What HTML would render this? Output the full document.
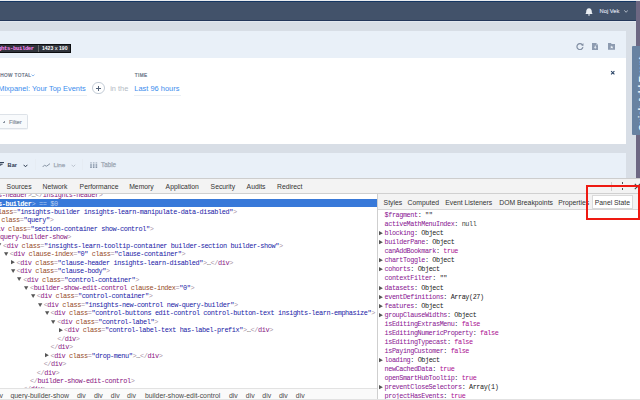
<!DOCTYPE html>
<html><head><meta charset="utf-8">
<style>
html,body{margin:0;padding:0;width:640px;height:400px;overflow:hidden;background:#fff;position:relative}
.a{position:absolute}
.sans{font-family:"Liberation Sans",sans-serif;white-space:pre}
.mono{font-family:"Liberation Mono",monospace;font-size:6.9px;letter-spacing:-0.39px;white-space:pre}
.tri-d,.tri-r{width:4px;height:4px}
.tab{font-family:"Liberation Sans",sans-serif;font-size:6.8px;color:#333;white-space:pre;line-height:9px}
</style></head><body>
<!-- ============ APP ============ -->
<div class="a" style="left:0;top:0;width:640px;height:178px;background:#d8dee6"></div>
<div class="a" style="left:0;top:0;width:640px;height:1px;background:#e9ecf0"></div>
<div class="a" style="left:0;top:1px;width:636px;height:1px;background:#153764"></div>
<div class="a" style="left:0;top:2px;width:636px;height:18px;background:#42526a"></div>
<div class="a" style="left:0;top:20px;width:636px;height:1px;background:#25375a"></div>
<div class="a" style="left:0;top:21px;width:636px;height:1px;background:#e2e7ee"></div>
<div class="a" style="left:636px;top:1px;width:4px;height:177px;background:#6d6782"></div>
<!-- bell -->
<svg class="a" style="left:585px;top:7.6px" width="8" height="8" viewBox="0 0 8 8"><path d="M4 0.3C1.9 0.3 1.2 2.2 1.2 3.8L1.0 5.2L0.2 6.0H7.8L7.0 5.2L6.8 3.8C6.8 2.2 6.1 0.3 4 0.3z" fill="#e9edf2"/><ellipse cx="4" cy="6.9" rx="1" ry="0.7" fill="#e9edf2"/></svg>
<div class="a sans" style="left:599.6px;top:7px;font-size:5.75px;line-height:8px;color:#d9dfe7;-webkit-text-stroke:0.15px #d9dfe7">Noj Vek</div>
<svg class="a" style="left:623.6px;top:10.2px" width="4.4" height="3" viewBox="0 0 4.4 3"><path d="M0.3 0.3L2.1 2.3L3.9 0.3" stroke="#c3cbd6" stroke-width="0.85" fill="none"/></svg>

<!-- top light-blue panel -->
<div class="a" style="left:0;top:30.5px;width:626px;height:27px;background:#e9f0f8"></div>
<!-- tooltip -->
<div class="a" style="left:-10px;top:43.9px;width:81px;height:9.5px;background:#30343c;box-sizing:border-box;border:1px solid #0c0d10"></div>
<div class="a mono" style="left:-2.0px;top:43.7px;font-size:5.6px;letter-spacing:-0.37px;line-height:9.5px;color:#ff85f3;font-weight:bold">ghts-builder</div>
<div class="a" style="left:38.2px;top:45.4px;width:0.7px;height:6.4px;background:#6a6a6a"></div>
<div class="a sans" style="left:41.9px;top:43.9px;font-size:5.1px;line-height:9.5px;color:#ffffff;font-weight:bold;transform:scaleY(1.2);transform-origin:0 50%">1423<span style="font-weight:normal;font-size:5.8px;margin:0 1.2px;position:relative;top:0.5px">×</span>190</div>
<!-- icons right -->
<svg class="a" style="left:575.5px;top:42.6px" width="8" height="7" viewBox="0 0 8 7"><path d="M6.6 2.2A3 3 0 1 0 6.9 4.2" stroke="#8491a5" stroke-width="1.25" fill="none"/><path d="M5.0 1.9L7.5 0.3L7.4 3.2z" fill="#8491a5"/></svg>
<svg class="a" style="left:591.9px;top:42.5px" width="6.5" height="7.2" viewBox="0 0 6.5 7.2"><path d="M0 0h4.2l2.3 2.3V7.2H0z" fill="#8d9bb0"/><path d="M4.2 0V2.3H6.5z" fill="#b9c4d3"/><rect x="2.8" y="2.6" width="0.9" height="2" fill="#eef3f9"/><path d="M1.9 4.3H4.6L3.25 5.8z" fill="#eef3f9"/></svg>
<svg class="a" style="left:607.6px;top:42.9px" width="7.5" height="6.8" viewBox="0 0 7.5 6.8"><path d="M0 0h2.9l0.8 0.9H7.5V6.8H0z" fill="#8d9bb0"/><path d="M3.75 2.6l0.55 1.1h1.2l-0.95 0.75 0.4 1.15-1.2-0.7-1.2 0.7 0.4-1.15-0.95-0.75h1.2z" fill="#eef3f9"/></svg>

<!-- white panel -->
<div class="a" style="left:0;top:57.5px;width:626px;height:86.5px;background:#ffffff"></div>
<div class="a sans" style="left:-3.4px;top:72.1px;font-size:4.7px;line-height:8px;color:#677283;letter-spacing:0.42px;-webkit-text-stroke:0.2px #677283">SHOW TOTAL</div>
<svg class="a" style="left:31.4px;top:74.4px" width="4" height="3" viewBox="0 0 4 3"><path d="M0.5 0.6L2 2L3.5 0.6" stroke="#5a9be6" stroke-width="0.7" fill="none"/></svg>
<div class="a sans" style="left:-1.8px;top:83.8px;font-size:7.45px;line-height:10px;color:#3c8ded">Mixpanel: Your Top Events</div>
<div class="a" style="left:0;top:95.2px;width:87px;height:0.8px;background:#ebf0f5"></div>
<div class="a" style="left:92.1px;top:81.9px;width:12.6px;height:12.6px;box-sizing:border-box;border:0.8px solid #c3ccd6;border-radius:50%;background:#fff"></div>
<div class="a" style="left:95.7px;top:87.85px;width:5.4px;height:0.9px;background:#55647a"></div>
<div class="a" style="left:97.95px;top:85.6px;width:0.9px;height:5.4px;background:#55647a"></div>
<div class="a sans" style="left:110.2px;top:83.8px;font-size:7.4px;line-height:10px;color:#b3bac4">in the</div>
<div class="a sans" style="left:134.7px;top:72.1px;font-size:4.7px;line-height:8px;color:#677283;letter-spacing:0.42px;-webkit-text-stroke:0.2px #677283">TIME</div>
<div class="a sans" style="left:134.3px;top:83.8px;font-size:7.45px;line-height:10px;color:#3c8ded">Last 96 hours</div>
<div class="a" style="left:134px;top:95.2px;width:46.5px;height:0.8px;background:#ebf0f5"></div>
<!-- close x -->
<svg class="a" style="left:610px;top:70px" width="5.5" height="5.5" viewBox="0 0 5.5 5.5"><path d="M1.1 1.1L4.4 4.4M4.4 1.1L1.1 4.4" stroke="#2a4466" stroke-width="1.1"/></svg>
<!-- filter button -->
<div class="a" style="left:-5px;top:114.4px;width:32.6px;height:14.6px;box-sizing:border-box;border:0.8px solid #dde2e8;border-radius:1.5px;background:#f8fafc;box-shadow:0 0.6px 0 #e6eaef"></div>
<div class="a" style="left:2.7px;top:121.6px;width:2.6px;height:0.8px;background:#8c96a3"></div><div class="a" style="left:3.6px;top:120.7px;width:0.8px;height:2.6px;background:#8c96a3"></div>
<div class="a sans" style="left:8.9px;top:117.6px;font-size:5.8px;line-height:8px;color:#838d99;-webkit-text-stroke:0.15px #838d99">Filter</div>

<!-- bottom light blue panel -->
<div class="a" style="left:0;top:153px;width:626px;height:25px;background:#e9f0f8"></div>
<svg class="a" style="left:-1px;top:161.5px" width="6" height="4.5" viewBox="0 0 6 4.5"><rect x="0" y="0" width="5" height="1.1" fill="#34445a"/><rect x="0" y="1.7" width="3.6" height="1.1" fill="#34445a"/><rect x="0" y="3.4" width="2.2" height="1.1" fill="#34445a"/></svg>
<div class="a sans" style="left:7.6px;top:161px;font-size:5.6px;line-height:8px;color:#2d3b4f;font-weight:bold">Bar</div>
<svg class="a" style="left:23px;top:163.5px" width="5" height="4" viewBox="0 0 5 4"><path d="M0.6 0.8L2.5 2.8L4.4 0.8" stroke="#2d3b4f" stroke-width="1" fill="none"/></svg>
<div class="a" style="left:34.5px;top:159px;width:0.6px;height:11px;background:#e6ecf3"></div>
<svg class="a" style="left:41.8px;top:162.8px" width="8.5" height="4.5" viewBox="0 0 8.5 4.5"><path d="M0.4 4L2.6 2.3L4.6 3.2L8.1 0.6" stroke="#8894a4" stroke-width="1" fill="none"/></svg>
<div class="a sans" style="left:53.5px;top:161px;font-size:6.2px;line-height:8px;color:#9ea8b4;-webkit-text-stroke:0.25px #9ea8b4">Line</div>
<svg class="a" style="left:71px;top:163.8px" width="5" height="4" viewBox="0 0 5 4"><path d="M0.6 0.8L2.4 2.6L4.2 0.8" stroke="#a7b0bb" stroke-width="0.7" fill="none"/></svg>
<div class="a" style="left:81.6px;top:159px;width:0.6px;height:11px;background:#e6ecf3"></div>
<svg class="a" style="left:90.4px;top:162.4px" width="7.4" height="6" viewBox="0 0 7.4 6"><rect x="0.2" y="0.3" width="1.6" height="1.2" fill="#a3afbf"/><rect x="2.9" y="0.3" width="1.6" height="1.2" fill="#a3afbf"/><rect x="5.6" y="0.3" width="1.6" height="1.2" fill="#a3afbf"/><rect x="0.2" y="2.4" width="1.6" height="1.2" fill="#6b7c93"/><rect x="2.9" y="2.4" width="1.6" height="1.2" fill="#6b7c93"/><rect x="5.6" y="2.4" width="1.6" height="1.2" fill="#6b7c93"/><rect x="0.2" y="4.5" width="1.6" height="1.2" fill="#5d6e86"/><rect x="2.9" y="4.5" width="1.6" height="1.2" fill="#5d6e86"/><rect x="5.6" y="4.5" width="1.6" height="1.2" fill="#5d6e86"/></svg>
<div class="a sans" style="left:101px;top:161px;font-size:6.3px;line-height:8px;color:#9ea8b4;-webkit-text-stroke:0.25px #9ea8b4">Table</div>

<!-- right strip tab -->
<div class="a" style="left:632px;top:46px;width:10px;height:88.5px;background:#6882a1;border-radius:1px"></div>
<div class="a sans" style="left:640.9px;top:94px;width:0;height:0"><div style="position:absolute;left:0;top:0;transform:translate(-50%,-50%) rotate(-90deg);font-size:9.4px;line-height:9px;color:#fff;font-weight:bold;white-space:pre">Quick Add Event</div></div>

<!-- ============ DEVTOOLS ============ -->
<div class="a" style="left:0;top:178px;width:640px;height:222px;background:#fff"></div>
<div class="a" style="left:0;top:178px;width:640px;height:15.5px;background:#f3f3f3;border-top:0.8px solid #cdcdcd;box-sizing:border-box;border-bottom:0.8px solid #d0d0d0"></div>
<div class="a tab" style="left:6.6px;top:181.5px">Sources</div>
<div class="a tab" style="left:42.6px;top:181.5px">Network</div>
<div class="a tab" style="left:79.6px;top:181.5px">Performance</div>
<div class="a tab" style="left:129.2px;top:181.5px">Memory</div>
<div class="a tab" style="left:165.6px;top:181.5px">Application</div>
<div class="a tab" style="left:210.6px;top:181.5px">Security</div>
<div class="a tab" style="left:246.6px;top:181.5px">Audits</div>
<div class="a tab" style="left:277.1px;top:181.5px">Redirect</div>
<div class="a" style="left:611.3px;top:181.5px;width:0.7px;height:9px;background:#cfcfcf"></div>
<div class="a" style="left:621.7px;top:182.2px;width:1px;height:1.6px;background:#555"></div>
<div class="a" style="left:621.6px;top:185.4px;width:1.1px;height:1.1px;background:#555"></div>
<div class="a" style="left:621.7px;top:188.4px;width:1px;height:1.6px;background:#555"></div>
<svg class="a" style="left:634.3px;top:182.8px" width="7" height="7" viewBox="0 0 7 7"><path d="M0.8 0.8L6.2 6.2M6.2 0.8L0.8 6.2" stroke="#444" stroke-width="1.1"/></svg>

<!-- DOM tree -->
<div class="a" style="left:0;top:193.5px;width:377px;height:194.5px;overflow:hidden">
<div class="a" style="left:0;top:-193.5px;width:640px;height:400px">
<div class="a mono" style="letter-spacing:-0.405px;left:-31.90px;top:191.05px;height:8.45px;line-height:8.45px"><span style="color:#a894a6">&lt;</span><span style="color:#881280">insights-header</span><span style="color:#a894a6">&gt;</span><span style="color:#333">…</span><span style="color:#a894a6">&lt;/</span><span style="color:#881280">insights-header</span><span style="color:#a894a6">&gt;</span></div>
<div class="a" style="left:0;top:198.70px;width:377px;height:8.45px;background:#3879d9"></div>
<div class="a mono" style="letter-spacing:-0.405px;left:-31.90px;top:199.50px;height:8.45px;line-height:8.45px"><span style="color:#fff;font-weight:bold">&lt;insights-builder</span><span style="color:#b9cdf0">&gt; == $0</span></div>
<div class="a mono" style="letter-spacing:-0.405px;left:-24.42px;top:207.95px;height:8.45px;line-height:8.45px"><span style="color:#a894a6">&lt;</span><span style="color:#881280">div</span> <span style="color:#954a1f">class</span><span style="color:#a894a6">=</span><span style="color:#1a1aa6">"insights-builder insights-learn-manipulate-data-disabled"</span><span style="color:#a894a6">&gt;</span></div>
<div class="a mono" style="letter-spacing:-0.405px;left:-17.54px;top:216.40px;height:8.45px;line-height:8.45px"><span style="color:#a894a6">&lt;</span><span style="color:#881280">div</span> <span style="color:#954a1f">class</span><span style="color:#a894a6">=</span><span style="color:#1a1aa6">"query"</span><span style="color:#a894a6">&gt;</span></div>
<div class="a mono" style="letter-spacing:-0.405px;left:-10.66px;top:224.85px;height:8.45px;line-height:8.45px"><span style="color:#a894a6">&lt;</span><span style="color:#881280">div</span> <span style="color:#954a1f">class</span><span style="color:#a894a6">=</span><span style="color:#1a1aa6">"section-container show-control"</span><span style="color:#a894a6">&gt;</span></div>
<div class="a mono" style="letter-spacing:-0.405px;left:-3.78px;top:233.30px;height:8.45px;line-height:8.45px"><span style="color:#a894a6">&lt;</span><span style="color:#881280">query-builder-show</span><span style="color:#a894a6">&gt;</span></div>
<svg class="a" style="left:-2.95px;top:243.45px" width="5" height="5" viewBox="0 0 5 5"><path d="M0 0.2H4.3L2.15 4z" fill="#555"/></svg>
<div class="a mono" style="letter-spacing:-0.405px;left:2.95px;top:241.75px;height:8.45px;line-height:8.45px"><span style="color:#a894a6">&lt;</span><span style="color:#881280">div</span> <span style="color:#954a1f">class</span><span style="color:#a894a6">=</span><span style="color:#1a1aa6">"insights-learn-tooltip-container builder-section builder-show"</span><span style="color:#a894a6">&gt;</span></div>
<svg class="a" style="left:3.83px;top:251.90px" width="5" height="5" viewBox="0 0 5 5"><path d="M0 0.2H4.3L2.15 4z" fill="#555"/></svg>
<div class="a mono" style="letter-spacing:-0.405px;left:9.73px;top:250.20px;height:8.45px;line-height:8.45px"><span style="color:#a894a6">&lt;</span><span style="color:#881280">div</span> <span style="color:#954a1f">clause-index</span><span style="color:#a894a6">=</span><span style="color:#1a1aa6">"0"</span> <span style="color:#954a1f">class</span><span style="color:#a894a6">=</span><span style="color:#1a1aa6">"clause-container"</span><span style="color:#a894a6">&gt;</span></div>
<svg class="a" style="left:11.11px;top:260.05px" width="5" height="5" viewBox="0 0 5 5"><path d="M0 0.1V4.3L3.9 2.2z" fill="#555"/></svg>
<div class="a mono" style="letter-spacing:-0.405px;left:16.51px;top:258.65px;height:8.45px;line-height:8.45px"><span style="color:#a894a6">&lt;</span><span style="color:#881280">div</span> <span style="color:#954a1f">class</span><span style="color:#a894a6">=</span><span style="color:#1a1aa6">"clause-header insights-learn-disabled"</span><span style="color:#a894a6">&gt;</span><span style="color:#333">…</span><span style="color:#a894a6">&lt;/</span><span style="color:#881280">div</span><span style="color:#a894a6">&gt;</span></div>
<svg class="a" style="left:10.61px;top:268.80px" width="5" height="5" viewBox="0 0 5 5"><path d="M0 0.2H4.3L2.15 4z" fill="#555"/></svg>
<div class="a mono" style="letter-spacing:-0.405px;left:16.51px;top:267.10px;height:8.45px;line-height:8.45px"><span style="color:#a894a6">&lt;</span><span style="color:#881280">div</span> <span style="color:#954a1f">class</span><span style="color:#a894a6">=</span><span style="color:#1a1aa6">"clause-body"</span><span style="color:#a894a6">&gt;</span></div>
<svg class="a" style="left:17.39px;top:277.25px" width="5" height="5" viewBox="0 0 5 5"><path d="M0 0.2H4.3L2.15 4z" fill="#555"/></svg>
<div class="a mono" style="letter-spacing:-0.405px;left:23.29px;top:275.55px;height:8.45px;line-height:8.45px"><span style="color:#a894a6">&lt;</span><span style="color:#881280">div</span> <span style="color:#954a1f">class</span><span style="color:#a894a6">=</span><span style="color:#1a1aa6">"control-container"</span><span style="color:#a894a6">&gt;</span></div>
<svg class="a" style="left:24.17px;top:285.70px" width="5" height="5" viewBox="0 0 5 5"><path d="M0 0.2H4.3L2.15 4z" fill="#555"/></svg>
<div class="a mono" style="letter-spacing:-0.405px;left:30.07px;top:284.00px;height:8.45px;line-height:8.45px"><span style="color:#a894a6">&lt;</span><span style="color:#881280">builder-show-edit-control</span> <span style="color:#954a1f">clause-index</span><span style="color:#a894a6">=</span><span style="color:#1a1aa6">"0"</span><span style="color:#a894a6">&gt;</span></div>
<svg class="a" style="left:30.95px;top:294.15px" width="5" height="5" viewBox="0 0 5 5"><path d="M0 0.2H4.3L2.15 4z" fill="#555"/></svg>
<div class="a mono" style="letter-spacing:-0.405px;left:36.85px;top:292.45px;height:8.45px;line-height:8.45px"><span style="color:#a894a6">&lt;</span><span style="color:#881280">div</span> <span style="color:#954a1f">class</span><span style="color:#a894a6">=</span><span style="color:#1a1aa6">"control-container"</span><span style="color:#a894a6">&gt;</span></div>
<svg class="a" style="left:37.73px;top:302.60px" width="5" height="5" viewBox="0 0 5 5"><path d="M0 0.2H4.3L2.15 4z" fill="#555"/></svg>
<div class="a mono" style="letter-spacing:-0.405px;left:43.63px;top:300.90px;height:8.45px;line-height:8.45px"><span style="color:#a894a6">&lt;</span><span style="color:#881280">div</span> <span style="color:#954a1f">class</span><span style="color:#a894a6">=</span><span style="color:#1a1aa6">"insights-new-control new-query-builder"</span><span style="color:#a894a6">&gt;</span></div>
<svg class="a" style="left:44.51px;top:311.05px" width="5" height="5" viewBox="0 0 5 5"><path d="M0 0.2H4.3L2.15 4z" fill="#555"/></svg>
<div class="a mono" style="letter-spacing:-0.405px;left:50.41px;top:309.35px;height:8.45px;line-height:8.45px"><span style="color:#a894a6">&lt;</span><span style="color:#881280">div</span> <span style="color:#954a1f">class</span><span style="color:#a894a6">=</span><span style="color:#1a1aa6">"control-buttons edit-control control-button-text insights-learn-emphasize"</span><span style="color:#a894a6">&gt;</span></div>
<svg class="a" style="left:51.29px;top:319.50px" width="5" height="5" viewBox="0 0 5 5"><path d="M0 0.2H4.3L2.15 4z" fill="#555"/></svg>
<div class="a mono" style="letter-spacing:-0.405px;left:57.19px;top:317.80px;height:8.45px;line-height:8.45px"><span style="color:#a894a6">&lt;</span><span style="color:#881280">div</span> <span style="color:#954a1f">class</span><span style="color:#a894a6">=</span><span style="color:#1a1aa6">"control-label"</span><span style="color:#a894a6">&gt;</span></div>
<svg class="a" style="left:58.57px;top:327.65px" width="5" height="5" viewBox="0 0 5 5"><path d="M0 0.1V4.3L3.9 2.2z" fill="#555"/></svg>
<div class="a mono" style="letter-spacing:-0.405px;left:63.97px;top:326.25px;height:8.45px;line-height:8.45px"><span style="color:#a894a6">&lt;</span><span style="color:#881280">div</span> <span style="color:#954a1f">class</span><span style="color:#a894a6">=</span><span style="color:#1a1aa6">"control-label-text has-label-prefix"</span><span style="color:#a894a6">&gt;</span><span style="color:#333">…</span><span style="color:#a894a6">&lt;/</span><span style="color:#881280">div</span><span style="color:#a894a6">&gt;</span></div>
<div class="a mono" style="letter-spacing:-0.405px;left:57.19px;top:334.70px;height:8.45px;line-height:8.45px"><span style="color:#a894a6">&lt;/</span><span style="color:#881280">div</span><span style="color:#a894a6">&gt;</span></div>
<div class="a mono" style="letter-spacing:-0.405px;left:50.41px;top:343.15px;height:8.45px;line-height:8.45px"><span style="color:#a894a6">&lt;/</span><span style="color:#881280">div</span><span style="color:#a894a6">&gt;</span></div>
<svg class="a" style="left:45.01px;top:353.00px" width="5" height="5" viewBox="0 0 5 5"><path d="M0 0.1V4.3L3.9 2.2z" fill="#555"/></svg>
<div class="a mono" style="letter-spacing:-0.405px;left:50.41px;top:351.60px;height:8.45px;line-height:8.45px"><span style="color:#a894a6">&lt;</span><span style="color:#881280">div</span> <span style="color:#954a1f">class</span><span style="color:#a894a6">=</span><span style="color:#1a1aa6">"drop-menu"</span><span style="color:#a894a6">&gt;</span><span style="color:#333">…</span><span style="color:#a894a6">&lt;/</span><span style="color:#881280">div</span><span style="color:#a894a6">&gt;</span></div>
<div class="a mono" style="letter-spacing:-0.405px;left:43.63px;top:360.05px;height:8.45px;line-height:8.45px"><span style="color:#a894a6">&lt;/</span><span style="color:#881280">div</span><span style="color:#a894a6">&gt;</span></div>
<div class="a mono" style="letter-spacing:-0.405px;left:36.85px;top:368.50px;height:8.45px;line-height:8.45px"><span style="color:#a894a6">&lt;/</span><span style="color:#881280">div</span><span style="color:#a894a6">&gt;</span></div>
<div class="a mono" style="letter-spacing:-0.405px;left:30.07px;top:376.95px;height:8.45px;line-height:8.45px"><span style="color:#a894a6">&lt;/</span><span style="color:#881280">builder-show-edit-control</span><span style="color:#a894a6">&gt;</span></div>
<div class="a mono" style="letter-spacing:-0.405px;left:23.29px;top:385.40px;height:8.45px;line-height:8.45px"><span style="color:#a894a6">&lt;/</span><span style="color:#881280">div</span><span style="color:#a894a6">&gt;</span></div>
</div></div>

<!-- breadcrumbs -->
<div class="a" style="left:0;top:387.8px;width:377px;height:12.2px;background:#fafafa;border-top:0.8px solid #e2e2e2;box-sizing:border-box"></div>
<div class="a sans" style="left:-0.4px;top:390.5px;font-size:6.9px;line-height:9px;color:#484848">v</div>
<div class="a sans" style="left:10.4px;top:390.5px;font-size:6.9px;line-height:9px;color:#484848">query-builder-show</div>
<div class="a sans" style="left:77px;top:390.5px;font-size:6.9px;line-height:9px;color:#484848">div</div>
<div class="a sans" style="left:93.9px;top:390.5px;font-size:6.9px;line-height:9px;color:#484848">div</div>
<div class="a sans" style="left:110.8px;top:390.5px;font-size:6.9px;line-height:9px;color:#484848">div</div>
<div class="a sans" style="left:127.1px;top:390.5px;font-size:6.9px;line-height:9px;color:#484848">div</div>
<div class="a sans" style="left:144.9px;top:390.5px;font-size:6.9px;line-height:9px;color:#484848">builder-show-edit-control</div>
<div class="a sans" style="left:228.9px;top:390.5px;font-size:6.9px;line-height:9px;color:#484848">div</div>
<div class="a sans" style="left:245.8px;top:390.5px;font-size:6.9px;line-height:9px;color:#484848">div</div>
<div class="a sans" style="left:262.3px;top:390.5px;font-size:6.9px;line-height:9px;color:#484848">div</div>
<div class="a sans" style="left:278.9px;top:390.5px;font-size:6.9px;line-height:9px;color:#484848">div</div>
<div class="a sans" style="left:295.8px;top:390.5px;font-size:6.9px;line-height:9px;color:#484848">div</div>

<!-- sidebar -->
<div class="a" style="left:377px;top:193.5px;width:0.8px;height:206.5px;background:#cfcfcf"></div>
<div class="a" style="left:377.8px;top:193.5px;width:262.2px;height:16.1px;background:#f3f3f3;border-bottom:0.8px solid #d6d6d6;box-sizing:border-box"></div>
<div class="a" style="left:592.3px;top:195.4px;width:40.7px;height:13.6px;background:#fff;border:0.8px solid #dadada;box-sizing:border-box"></div>
<div class="a tab" style="left:383.6px;top:197.8px">Styles</div>
<div class="a tab" style="left:407.6px;top:197.8px">Computed</div>
<div class="a tab" style="left:445.3px;top:197.8px">Event Listeners</div>
<div class="a tab" style="left:499.3px;top:197.8px">DOM Breakpoints</div>
<div class="a tab" style="left:558.2px;top:197.8px">Properties</div>
<div class="a tab" style="left:594.8px;top:197.8px">Panel State</div>
<div class="a mono" style="font-size:6.8px;letter-spacing:-0.41px;left:384.6px;top:211.18px;height:9.045px;line-height:9.045px"><span style="color:#881391">$fragment</span><span style="color:#303942">: </span><span style="color:#222">""</span></div>
<div class="a mono" style="font-size:6.8px;letter-spacing:-0.41px;left:384.6px;top:220.22px;height:9.045px;line-height:9.045px"><span style="color:#881391">activeMathMenuIndex</span><span style="color:#303942">: </span><span style="color:#444">null</span></div>
<svg class="a" style="left:378.5px;top:231.27px" width="5" height="5" viewBox="0 0 5 5"><path d="M0 0.1V4.3L3.9 2.2z" fill="#555"/></svg>
<div class="a mono" style="font-size:6.8px;letter-spacing:-0.41px;left:384.6px;top:229.27px;height:9.045px;line-height:9.045px"><span style="color:#881391">blocking</span><span style="color:#303942">: </span><span style="color:#222">Object</span></div>
<svg class="a" style="left:378.5px;top:240.31px" width="5" height="5" viewBox="0 0 5 5"><path d="M0 0.1V4.3L3.9 2.2z" fill="#555"/></svg>
<div class="a mono" style="font-size:6.8px;letter-spacing:-0.41px;left:384.6px;top:238.31px;height:9.045px;line-height:9.045px"><span style="color:#881391">builderPane</span><span style="color:#303942">: </span><span style="color:#222">Object</span></div>
<div class="a mono" style="font-size:6.8px;letter-spacing:-0.41px;left:384.6px;top:247.36px;height:9.045px;line-height:9.045px"><span style="color:#881391">canAddBookmark</span><span style="color:#303942">: </span><span style="color:#aa0d91">true</span></div>
<svg class="a" style="left:378.5px;top:258.40px" width="5" height="5" viewBox="0 0 5 5"><path d="M0 0.1V4.3L3.9 2.2z" fill="#555"/></svg>
<div class="a mono" style="font-size:6.8px;letter-spacing:-0.41px;left:384.6px;top:256.40px;height:9.045px;line-height:9.045px"><span style="color:#881391">chartToggle</span><span style="color:#303942">: </span><span style="color:#222">Object</span></div>
<svg class="a" style="left:378.5px;top:267.45px" width="5" height="5" viewBox="0 0 5 5"><path d="M0 0.1V4.3L3.9 2.2z" fill="#555"/></svg>
<div class="a mono" style="font-size:6.8px;letter-spacing:-0.41px;left:384.6px;top:265.45px;height:9.045px;line-height:9.045px"><span style="color:#881391">cohorts</span><span style="color:#303942">: </span><span style="color:#222">Object</span></div>
<div class="a mono" style="font-size:6.8px;letter-spacing:-0.41px;left:384.6px;top:274.49px;height:9.045px;line-height:9.045px"><span style="color:#881391">contextFilter</span><span style="color:#303942">: </span><span style="color:#222">""</span></div>
<svg class="a" style="left:378.5px;top:285.54px" width="5" height="5" viewBox="0 0 5 5"><path d="M0 0.1V4.3L3.9 2.2z" fill="#555"/></svg>
<div class="a mono" style="font-size:6.8px;letter-spacing:-0.41px;left:384.6px;top:283.54px;height:9.045px;line-height:9.045px"><span style="color:#881391">datasets</span><span style="color:#303942">: </span><span style="color:#222">Object</span></div>
<svg class="a" style="left:378.5px;top:294.58px" width="5" height="5" viewBox="0 0 5 5"><path d="M0 0.1V4.3L3.9 2.2z" fill="#555"/></svg>
<div class="a mono" style="font-size:6.8px;letter-spacing:-0.41px;left:384.6px;top:292.58px;height:9.045px;line-height:9.045px"><span style="color:#881391">eventDefinitions</span><span style="color:#303942">: </span><span style="color:#222">Array(27)</span></div>
<svg class="a" style="left:378.5px;top:303.63px" width="5" height="5" viewBox="0 0 5 5"><path d="M0 0.1V4.3L3.9 2.2z" fill="#555"/></svg>
<div class="a mono" style="font-size:6.8px;letter-spacing:-0.41px;left:384.6px;top:301.63px;height:9.045px;line-height:9.045px"><span style="color:#881391">features</span><span style="color:#303942">: </span><span style="color:#222">Object</span></div>
<svg class="a" style="left:378.5px;top:312.67px" width="5" height="5" viewBox="0 0 5 5"><path d="M0 0.1V4.3L3.9 2.2z" fill="#555"/></svg>
<div class="a mono" style="font-size:6.8px;letter-spacing:-0.41px;left:384.6px;top:310.67px;height:9.045px;line-height:9.045px"><span style="color:#881391">groupClauseWidths</span><span style="color:#303942">: </span><span style="color:#222">Object</span></div>
<div class="a mono" style="font-size:6.8px;letter-spacing:-0.41px;left:384.6px;top:319.72px;height:9.045px;line-height:9.045px"><span style="color:#881391">isEditingExtrasMenu</span><span style="color:#303942">: </span><span style="color:#aa0d91">false</span></div>
<div class="a mono" style="font-size:6.8px;letter-spacing:-0.41px;left:384.6px;top:328.76px;height:9.045px;line-height:9.045px"><span style="color:#881391">isEditingNumericProperty</span><span style="color:#303942">: </span><span style="color:#aa0d91">false</span></div>
<div class="a mono" style="font-size:6.8px;letter-spacing:-0.41px;left:384.6px;top:337.81px;height:9.045px;line-height:9.045px"><span style="color:#881391">isEditingTypecast</span><span style="color:#303942">: </span><span style="color:#aa0d91">false</span></div>
<div class="a mono" style="font-size:6.8px;letter-spacing:-0.41px;left:384.6px;top:346.85px;height:9.045px;line-height:9.045px"><span style="color:#881391">isPayingCustomer</span><span style="color:#303942">: </span><span style="color:#aa0d91">false</span></div>
<svg class="a" style="left:378.5px;top:357.90px" width="5" height="5" viewBox="0 0 5 5"><path d="M0 0.1V4.3L3.9 2.2z" fill="#555"/></svg>
<div class="a mono" style="font-size:6.8px;letter-spacing:-0.41px;left:384.6px;top:355.90px;height:9.045px;line-height:9.045px"><span style="color:#881391">loading</span><span style="color:#303942">: </span><span style="color:#222">Object</span></div>
<div class="a mono" style="font-size:6.8px;letter-spacing:-0.41px;left:384.6px;top:364.94px;height:9.045px;line-height:9.045px"><span style="color:#881391">newCachedData</span><span style="color:#303942">: </span><span style="color:#aa0d91">true</span></div>
<div class="a mono" style="font-size:6.8px;letter-spacing:-0.41px;left:384.6px;top:373.99px;height:9.045px;line-height:9.045px"><span style="color:#881391">openSmartHubTooltip</span><span style="color:#303942">: </span><span style="color:#aa0d91">true</span></div>
<svg class="a" style="left:378.5px;top:385.03px" width="5" height="5" viewBox="0 0 5 5"><path d="M0 0.1V4.3L3.9 2.2z" fill="#555"/></svg>
<div class="a mono" style="font-size:6.8px;letter-spacing:-0.41px;left:384.6px;top:383.03px;height:9.045px;line-height:9.045px"><span style="color:#881391">preventCloseSelectors</span><span style="color:#303942">: </span><span style="color:#222">Array(1)</span></div>
<div class="a mono" style="font-size:6.8px;letter-spacing:-0.41px;left:384.6px;top:392.08px;height:9.045px;line-height:9.045px"><span style="color:#881391">projectHasEvents</span><span style="color:#303942">: </span><span style="color:#aa0d91">true</span></div>

<div class="a" style="left:0;top:399.2px;width:640px;height:0.8px;background:#e2e2e2"></div>
<!-- red highlight box -->
<div class="a" style="left:585.9px;top:185px;width:53.8px;height:34.5px;box-sizing:border-box;border:2.3px solid #ee1a12"></div>
</body></html>
